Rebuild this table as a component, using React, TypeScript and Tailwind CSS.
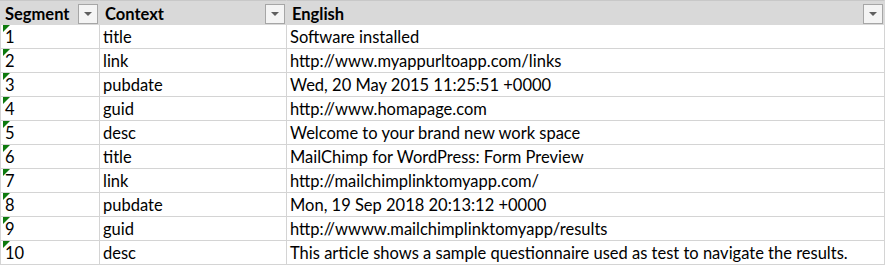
import React from "react";

const rows: [string, string, string][] = [
  ["1", "title", "Software installed"],
  ["2", "link", "http://www.myappurltoapp.com/links"],
  ["3", "pubdate", "Wed, 20 May 2015 11:25:51 +0000"],
  ["4", "guid", "http://www.homapage.com"],
  ["5", "desc", "Welcome to your brand new work space"],
  ["6", "title", "MailChimp for WordPress: Form Preview"],
  ["7", "link", "http://mailchimplinktomyapp.com/"],
  ["8", "pubdate", "Mon, 19 Sep 2018 20:13:12 +0000"],
  ["9", "guid", "http://wwww.mailchimplinktomyapp/results"],
  ["10", "desc", "This article shows a sample questionnaire used as test to navigate the results."],
];

const FilterButton = () => (
  <div className="absolute right-px top-[3px] flex h-5 w-5 items-center justify-center border border-[#a6a6a6] bg-[#f4f4f4]">
    <div className="h-[4px] w-[8px] bg-[#5f5f5f] [clip-path:polygon(0_0,100%_0,50%_100%)]" />
  </div>
);

const HeaderCell = ({ label, last }: { label: string; last?: boolean }) => (
  <div
    className={`relative flex h-[25px] items-center border-t border-r border-t-[#c8c8c8] border-r-[#d9d9d9] pt-[2px] pl-[5px] font-bold ${
      last ? "border-t-[#217346]" : ""
    }`}
  >
    {label}
    <FilterButton />
  </div>
);

export default function App() {
  return (
    <div className="h-[266px] w-[886px] bg-white text-[16.5px] leading-none text-black [font-family:Lato,'Liberation_Sans',sans-serif]">
      <div className="grid w-[885px] grid-cols-[100px_187px_598px]">
        <div className="col-span-3 grid grid-cols-[100px_187px_598px] bg-[#d9d9d9]">
          <HeaderCell label="Segment" />
          <HeaderCell label="Context" />
          <HeaderCell label="English" last />
        </div>
        {rows.map(([seg, ctx, en]) => (
          <React.Fragment key={seg}>
            <div className="relative flex h-6 items-center border-b border-r border-l border-[#d4d4d4] pt-[2px] pl-[4px]">
              <div className="absolute left-[2px] top-0 h-[7px] w-[7px] bg-[#0e7a0e] [clip-path:polygon(0_0,100%_0,0_100%)]" />
              {seg}
            </div>
            <div className="flex h-6 items-center border-b border-r border-[#d4d4d4] pt-[2px] pl-[3px]">{ctx}</div>
            <div className="flex h-6 items-center border-b border-r border-[#d4d4d4] pt-[2px] pl-[3px] whitespace-nowrap">{en}</div>
          </React.Fragment>
        ))}
      </div>
    </div>
  );
}
